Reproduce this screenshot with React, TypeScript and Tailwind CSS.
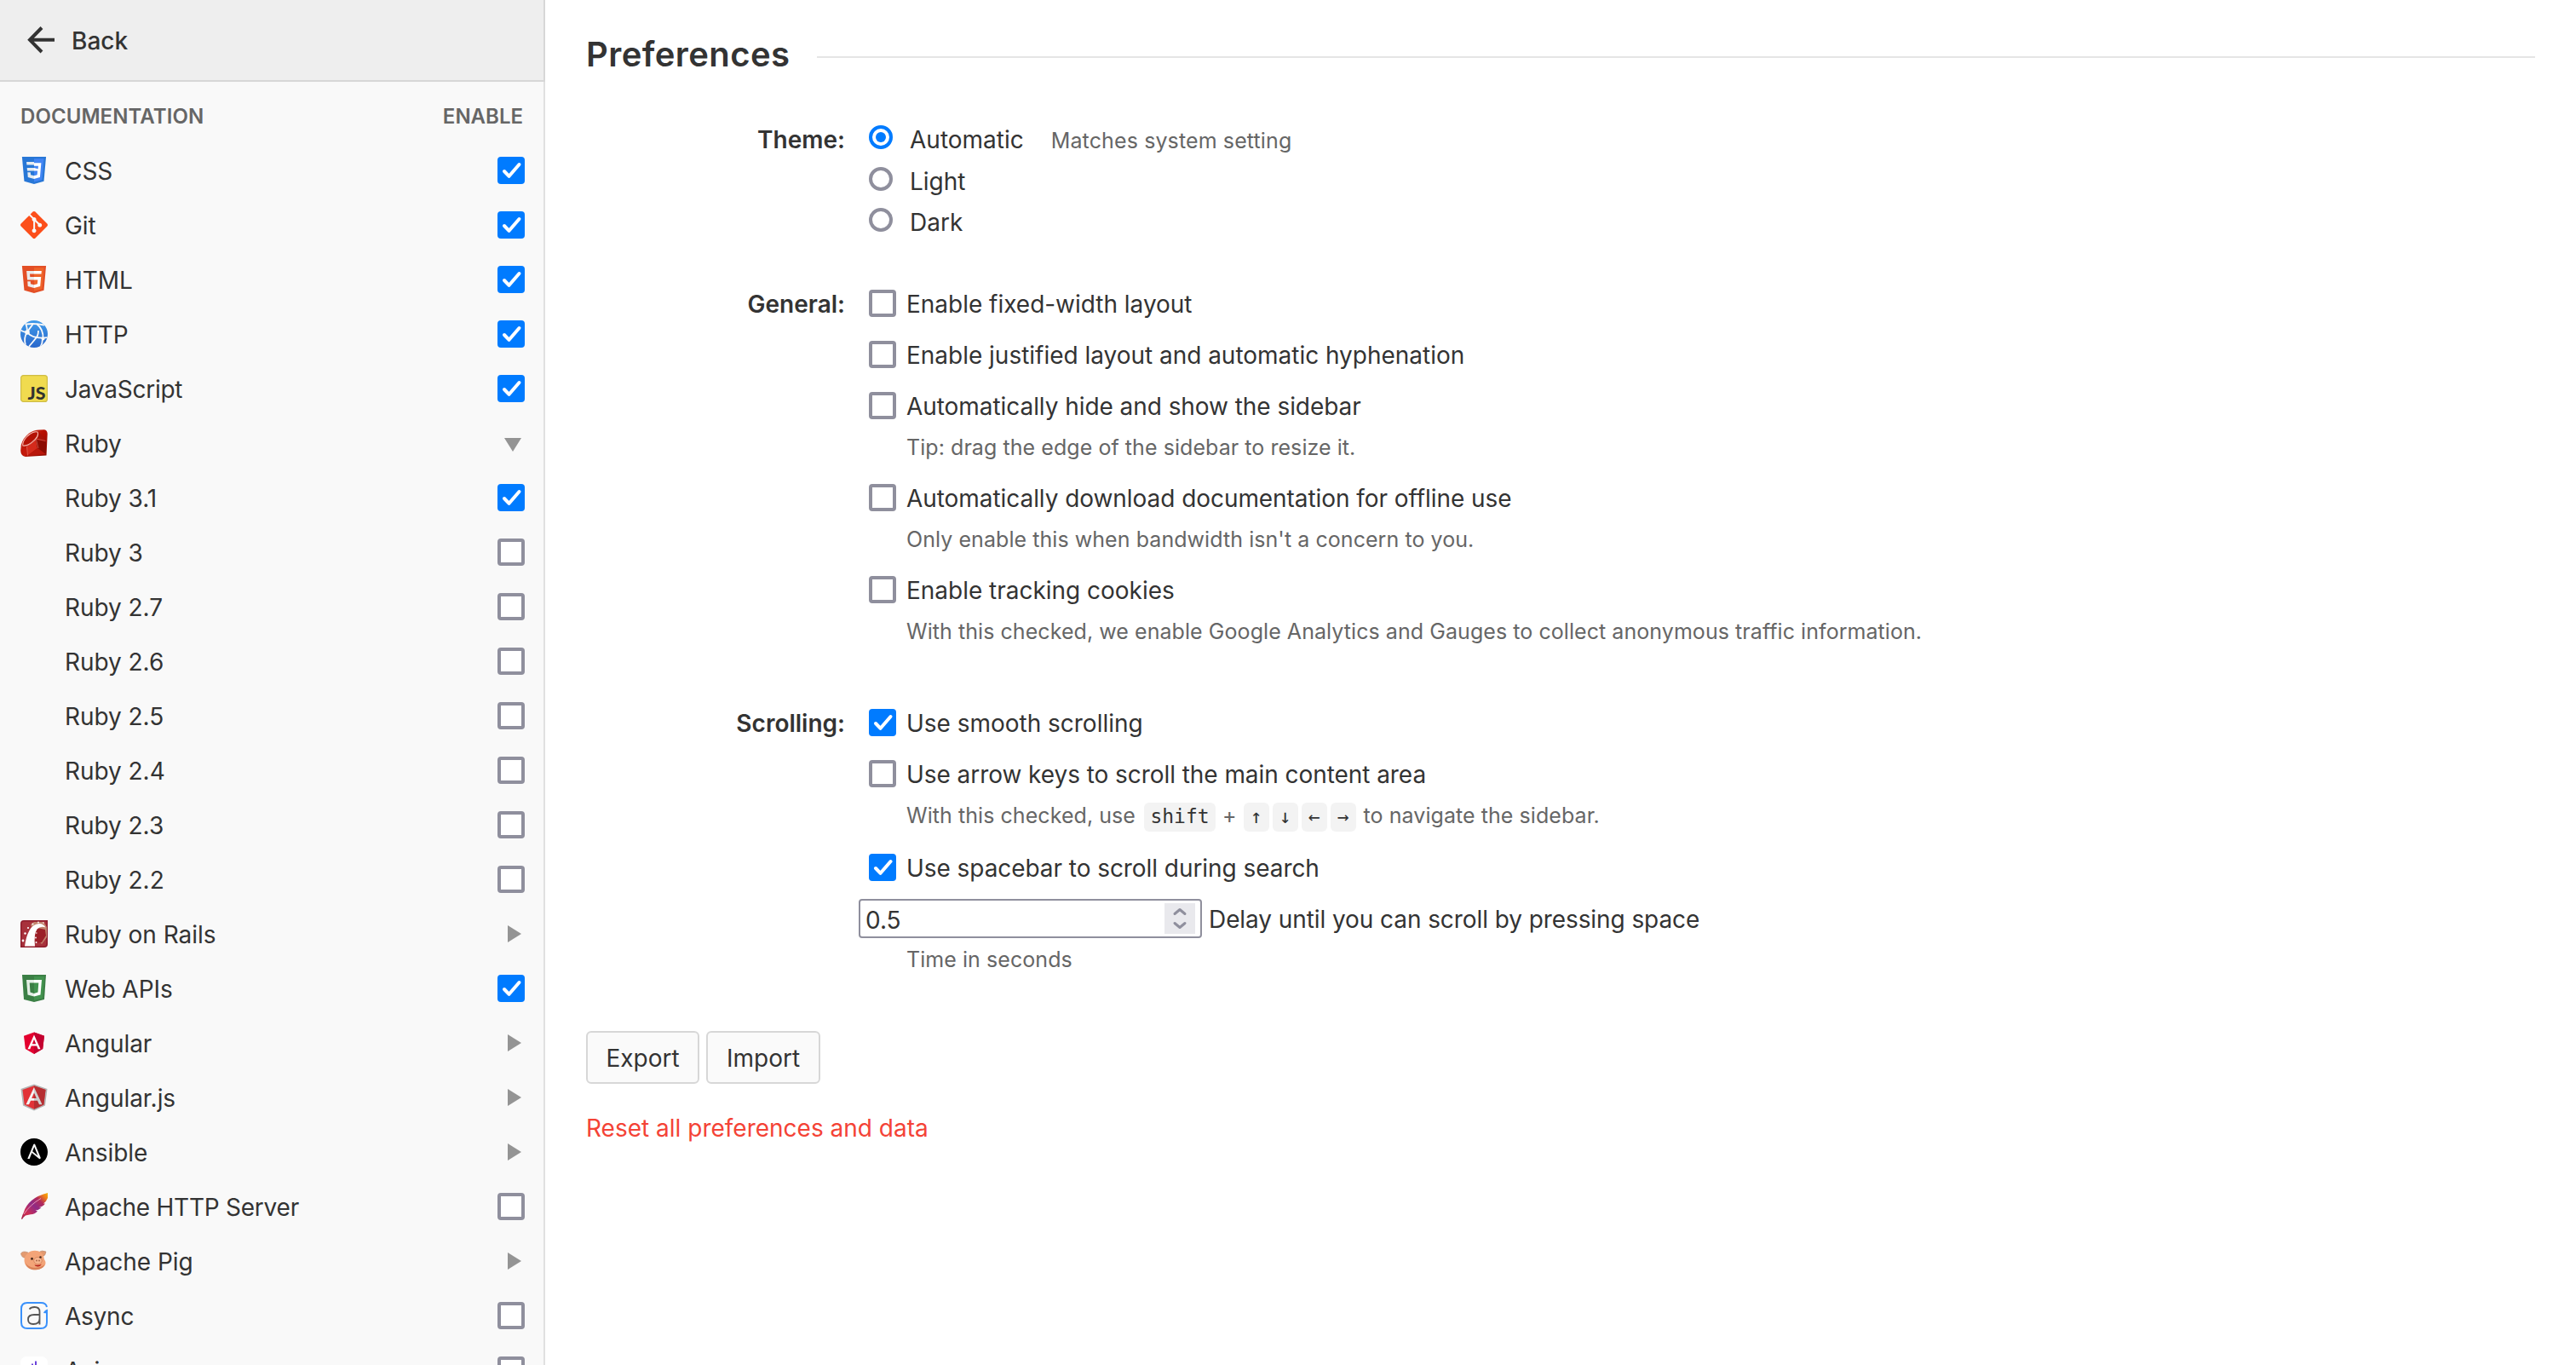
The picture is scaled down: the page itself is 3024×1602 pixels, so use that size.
import React from "react";
import { SiGit, SiAnsible } from "react-icons/si";

/* ---------- Documentation icons, all on a 32px grid ---------- */

function Svg({ children, viewBox = "0 0 32 32" }: { children: React.ReactNode; viewBox?: string }) {
  return (
    <svg className="h-8 w-8" viewBox={viewBox}>
      {children}
    </svg>
  );
}

const CssIcon = () => (
  <Svg viewBox="0 0 512 512">
    <path fill="#2877d6" d="M71 460L30 0h451l-41 460-185 52" />
    <path fill="#4285f4" d="M256 472l149-41 35-394H256" />
    <path fill="#e6ebf0" d="M256 208H123l5 57h128zm0-114H113l5 56h138zm0 320v-59l-63-17-4-45h-56l7 89 116 32z" />
    <path fill="#fff" d="M255 208v57h66l-7 73-59 17v59l112-32 23-268H255v56h80l-5 58z" />
  </Svg>
);

const HtmlIcon = () => (
  <Svg viewBox="0 0 512 512">
    <path fill="#e34f26" d="M71 460L30 0h451l-41 460-185 52" />
    <path fill="#ef652a" d="M256 472l149-41 35-394H256" />
    <path fill="#ebebeb" d="M256 208h-75l-5-58h80V94H114l15 171h127zm-1 147l-63-17-4-45h-56l7 89 116 32z" />
    <path fill="#fff" d="M255 208v57h70l-7 73-63 17v59l116-32 16-174zm0-114v56h137l5-56z" />
  </Svg>
);

const GitIcon = () => <SiGit className="h-8 w-8 text-[#fc4f1b]" />;

const HttpIcon = () => (
  <Svg>
    <defs>
      <linearGradient id="globe" x1="0" y1="0" x2="0" y2="1">
        <stop offset="0" stopColor="#3f9bea" />
        <stop offset="1" stopColor="#2a68cc" />
      </linearGradient>
      <clipPath id="globe-clip">
        <circle cx="16" cy="16" r="16" />
      </clipPath>
    </defs>
    <circle cx="16" cy="16" r="16" fill="url(#globe)" />
    <g clipPath="url(#globe-clip)" fill="none" stroke="#f9f9f9" strokeWidth="1.800">
      <path d="M5 2C7 5 8 9 8 14C5 18 4 22 6 29" />
      <path d="M6 4.500C14 3.500 19 3.500 28 5.500" />
      <path d="M-1 11C3 13.500 5 14 8 14C10 10 12 8 15 4" />
      <path d="M8 14C12 19 19 22 33 20" />
      <path d="M19 4C24 8 27 14 26.500 21.500" />
      <path d="M21 12C21 16 20 19 18 21C15 25 12 28 9 32" />
      <path d="M26 21.500C26 25 25 29 23 32" />
    </g>
    <circle cx="8" cy="14" r="2.800" fill="#f9f9f9" />
    <circle cx="26.500" cy="21.500" r="2" fill="#f9f9f9" />
  </Svg>
);

const JsIcon = () => (
  <Svg>
    <rect x="0.600" y="0.600" width="30.800" height="30.800" rx="3" fill="#f0db4f" stroke="#cfbd45" strokeWidth="1.200" />
    <text x="8.600" y="29" fill="#323330" fontFamily="Lato" fontWeight="900" fontSize="20" textLength="21" lengthAdjust="spacingAndGlyphs">
      JS
    </text>
  </Svg>
);

const RubyIcon = () => (
  <Svg>
    <defs>
      <linearGradient id="gem" x1="0" y1="0" x2="1" y2="1">
        <stop offset="0" stopColor="#e0584a" />
        <stop offset="0.450" stopColor="#b80f00" />
        <stop offset="1" stopColor="#8a0a00" />
      </linearGradient>
    </defs>
    <path d="M22 0.500L28 0.300Q31.500 1 31.700 5L30.500 30.500L6 32Q0.500 31 0.200 25L0.800 18Q3 10 10 4.500Q16 0.500 22 0.500Z" fill="url(#gem)" />
    <path d="M2 22L7 21L8 31L4 31Q1 29 2 22Z" fill="#c41a0c" />
    <path d="M7 21L18 12L20 22L8 31Z" fill="#d42a1b" />
    <path d="M18 12L30 14L30 29L20 22Z" fill="#8c0c02" />
    <path d="M20 22L30 29L8 31Z" fill="#b8170b" />
    <path d="M20 12L22 3L30 13Z" fill="#a81206" />
    <path d="M3 19Q1.500 15 8 8Q15 1.500 20 3Q22 7 17 12Q9 20 3 19Z" fill="#b31205" stroke="#f3b9b0" strokeWidth="1.100" />
    <path d="M18.500 11L29.500 13.500M18.500 11.500L7.500 20L8.500 30.500M18.500 12L21 22" fill="none" stroke="#e2766a" strokeWidth="0.600" />
  </Svg>
);

const RailsIcon = () => (
  <Svg>
    <path d="M4 0H32V28Q32 32 28 32H0V4Q0 0 4 0Z" fill="#8f1d2c" />
    <path d="M4 1.500H30.500V27Q30.500 30.500 27 30.500H1.500V4Q1.500 1.500 4 1.500Z" fill="#a8323c" />
    <path d="M12 5L16 2H27L31 8V20L25 28L18 20Z" fill="#c9997a" opacity="0.800" />
    <path d="M20 9L29 11L30 18L25 26L17.500 27L17 16Z" fill="#9c2028" />
    <path d="M5 30.500Q6.500 19 10.500 12Q14.500 4.500 22 4Q27 4 29.500 8.500Q23.500 6.500 19.500 10.500Q15.500 16 17 30.500Z" fill="#fff" />
    <g fill="#fff">
      <circle cx="3" cy="24" r="1.400" />
      <circle cx="5.500" cy="15.500" r="1.200" />
      <circle cx="9" cy="9" r="1.100" />
      <circle cx="14.500" cy="4.500" r="1" />
      <circle cx="21" cy="2.500" r="0.900" />
      <circle cx="27" cy="3" r="0.800" />
      <circle cx="18.800" cy="15" r="0.800" />
      <circle cx="18" cy="20.500" r="0.900" />
      <circle cx="18.500" cy="26" r="1" />
    </g>
  </Svg>
);

const WebApiIcon = () => (
  <Svg>
    <path d="M2 0H30L28 29L16 32L4 29Z" fill="#3b7f45" />
    <path d="M16 2H28L26 27.500L16 30Z" fill="#43934f" />
    <path d="M7 6H16V9.500H10.700L11.500 20.500L16 22V25.500L8.500 23.500Z" fill="#e3eee5" />
    <path d="M25 6H16V9.500H21.300L20.500 20.500L16 22V25.500L23.500 23.500Z" fill="#fff" />
  </Svg>
);

const AngularIcon = () => (
  <Svg>
    <path d="M16 3.500L28 7.800L26.200 23L16 29L5.800 23L4 7.800Z" fill="#e4002f" />
    <path d="M16 3.500L28 7.800L26.200 23L16 29Z" fill="#c30030" />
    <path d="M16 6.500L8.500 23.300H11.300L12.800 19.500H19.200L20.700 23.300H23.500ZM16 11.700L18.200 17.200H13.800Z" fill="#fff" fillRule="evenodd" />
  </Svg>
);

const AngularJsIcon = () => (
  <Svg>
    <path d="M16 0.500L31.500 6L29 25.500L16 31.500L3 25.500L0.500 6Z" fill="#b3b3b3" />
    <path d="M16 2.200L29.500 7L27.300 24.500L16 29.800L4.700 24.500L2.500 7Z" fill="#e23237" />
    <path d="M16 2.200L29.500 7L27.300 24.500L16 29.800Z" fill="#b52e31" />
    <path d="M16 4L6.500 24.300H10L12 19.800H16V17H13.200L16 10.500Z" fill="#f4f4f4" />
    <path d="M16 4V10.500L18.800 17H16V19.800H20L22 24.300H25.500Z" fill="#cfcfcf" />
  </Svg>
);

const AnsibleIcon = () => <SiAnsible className="h-8 w-8 text-black" />;

const FeatherIcon = () => (
  <Svg>
    <defs>
      <linearGradient id="feather" x1="1" y1="0" x2="0" y2="1">
        <stop offset="0" stopColor="#f7b500" />
        <stop offset="0.140" stopColor="#ee7a1c" />
        <stop offset="0.300" stopColor="#b22a5a" />
        <stop offset="0.500" stopColor="#8f2a86" />
        <stop offset="0.780" stopColor="#cf2f52" />
        <stop offset="1" stopColor="#9c2149" />
      </linearGradient>
    </defs>
    <path
      d="M32 0L32 6Q30.500 10 27 12.500L29 12.500Q27 15.500 22 17L24.500 17.500Q21 20.500 17.500 20.500L20 21.500Q17 25 12 25.300L6 26.500Q3.500 28 2 31L1 30.500Q2 26 4 22.500Q6 15 13 9Q20 3 32 0Z"
      fill="url(#feather)"
    />
    <path d="M4 25Q11 14 24 6.500" fill="none" stroke="#e8a0c4" strokeWidth="0.900" />
  </Svg>
);

const PigIcon = () => (
  <Svg>
    <path d="M0.500 7Q3 3.500 9 6L6.500 12Q1.500 13 0.500 7Z" fill="#e39a70" stroke="#b98a6e" strokeWidth="0.600" />
    <path d="M30 5Q25 2.500 21 6L25.500 11Q29.500 10 30 5Z" fill="#e39a70" stroke="#b98a6e" strokeWidth="0.600" />
    <path d="M17 3.800C10 3.800 5 8.500 4.500 14.500C4.300 21 9 26.300 17 26.300C24 26.300 29.500 22.500 29.500 18C29.500 15.500 27.500 14.500 27.500 12C26 6.500 22.500 3.800 17 3.800Z" fill="#f3a478" />
    <path d="M6 18C9 24.500 22 26 28.500 20C27 24.500 22 26.300 17 26.300C11 26.300 7 23 6 18Z" fill="#d98258" />
    <ellipse cx="20.500" cy="15.500" rx="4.800" ry="4" fill="#f7b58f" stroke="#cc7a50" strokeWidth="0.700" />
    <ellipse cx="19" cy="15.500" rx="0.700" ry="1.100" fill="#8a4526" />
    <ellipse cx="22" cy="15.500" rx="0.700" ry="1.100" fill="#8a4526" />
    <circle cx="13.500" cy="13.200" r="1.500" fill="#4a2d20" />
    <circle cx="23.500" cy="11.500" r="1.300" fill="#4a2d20" />
    <path d="M16.500 20.200Q21 21.500 25 19.500Q22.500 24 17.500 21.800Z" fill="#b3201a" />
  </Svg>
);

const AsyncIcon = () => (
  <Svg>
    <path d="M31 6Q30 1 24 1H8Q1 1 1 8V24Q1 31 8 31H24Q31 31 31 24V11" fill="none" stroke="#3a91fb" strokeWidth="2" />
    <path d="M27 13Q28 9.500 32 8.500V13.500Z" fill="#3a91fb" />
    <path d="M10.500 8.500Q12.500 6 16.500 6Q22.500 6 22.500 11.500V26.500M22.500 15H16Q9 15 9 20.500Q9 26 15 26Q22.500 26 22.500 19.500" fill="none" stroke="#555" strokeWidth="1.800" />
  </Svg>
);

const AxiosIcon = () => (
  <Svg>
    <rect width="32" height="32" rx="7" fill="#fff" />
    <path d="M14 8.500V24M18 5.500V20" stroke="#5b2fd6" strokeWidth="1.800" />
    <path d="M5 26L11 14M27 26L21 14" stroke="#5b2fd6" strokeWidth="1.800" />
  </Svg>
);

/* ---------- Form controls ---------- */

function Checkbox({ checked = false }: { checked?: boolean }) {
  return checked ? (
    <span className="flex h-8 w-8 shrink-0 rounded bg-[#007bff]" role="checkbox" aria-checked="true">
      <svg className="h-8 w-8" viewBox="0 0 32 32" fill="none" stroke="#fff" strokeWidth="4" strokeLinecap="round" strokeLinejoin="round">
        <path d="M8 17L13.600 22.800L25.500 9" />
      </svg>
    </span>
  ) : (
    <span className="h-8 w-8 shrink-0 rounded border-4 border-[#8f8f9d] bg-white" role="checkbox" aria-checked="false" />
  );
}

function Radio({ checked = false }: { checked?: boolean }) {
  return checked ? (
    <span className="mb-[5px] flex h-7 w-7 shrink-0 items-center justify-center rounded-full border-4 border-[#007bff] bg-white">
      <span className="h-3 w-3 rounded-full bg-[#007bff]" />
    </span>
  ) : (
    <span className="mb-[5px] h-7 w-7 shrink-0 rounded-full border-4 border-[#8f8f9d] bg-white" />
  );
}

/* ---------- Sidebar ---------- */

type Control = "on" | "off" | "open" | "closed";
type Doc = { name: string; control: Control; icon?: React.ReactNode; tight?: boolean };

const docs: Doc[] = [
  { name: "CSS", control: "on", icon: <CssIcon /> },
  { name: "Git", control: "on", icon: <GitIcon /> },
  { name: "HTML", control: "on", icon: <HtmlIcon /> },
  { name: "HTTP", control: "on", icon: <HttpIcon /> },
  { name: "JavaScript", control: "on", icon: <JsIcon />, tight: true },
  { name: "Ruby", control: "open", icon: <RubyIcon /> },
  { name: "Ruby 3.1", control: "on" },
  { name: "Ruby 3", control: "off" },
  { name: "Ruby 2.7", control: "off" },
  { name: "Ruby 2.6", control: "off" },
  { name: "Ruby 2.5", control: "off" },
  { name: "Ruby 2.4", control: "off" },
  { name: "Ruby 2.3", control: "off" },
  { name: "Ruby 2.2", control: "off" },
  { name: "Ruby on Rails", control: "closed", icon: <RailsIcon /> },
  { name: "Web APIs", control: "on", icon: <WebApiIcon /> },
  { name: "Angular", control: "closed", icon: <AngularIcon /> },
  { name: "Angular.js", control: "closed", icon: <AngularJsIcon /> },
  { name: "Ansible", control: "closed", icon: <AnsibleIcon /> },
  { name: "Apache HTTP Server", control: "off", icon: <FeatherIcon />, tight: true },
  { name: "Apache Pig", control: "closed", icon: <PigIcon /> },
  { name: "Async", control: "off", icon: <AsyncIcon />, tight: true },
  { name: "Axios", control: "off", icon: <AxiosIcon /> },
];

function RowControl({ control }: { control: Control }) {
  if (control === "on") return <Checkbox checked />;
  if (control === "off") return <Checkbox />;
  return control === "open" ? (
    <svg className="mt-1 mr-1 h-4 w-5" viewBox="0 0 20 16" fill="#949494">
      <path d="M0 0H20L10 16Z" />
    </svg>
  ) : (
    <svg className="mr-1 h-5 w-4" viewBox="0 0 16 20" fill="#949494">
      <path d="M0 0L16 10L0 20Z" />
    </svg>
  );
}

function Sidebar() {
  return (
    <aside className="flex w-[640px] shrink-0 flex-col border-r-2 border-[#e1e1e1] bg-[#f9f9f9]">
      <div className="-mr-0.5 flex h-24 shrink-0 items-center border-r-2 border-b-2 border-[#d7d7d7] bg-[#eee] pl-8">
        <svg className="h-8 w-8" viewBox="0 0 32 32" fill="none" stroke="#333" strokeWidth="4">
          <path d="M17 1.500L3 15.800L17 30M3 15.800H32" />
        </svg>
        <span className="mt-0.5 ml-5 font-medium">Back</span>
      </div>
      <div className="flex h-[72px] shrink-0 items-center justify-between pt-2.5 pr-6 pl-6 text-2xl font-semibold text-[#666]">
        <span className="tracking-[0.07px]">DOCUMENTATION</span>
        <span>ENABLE</span>
      </div>
      {docs.map((doc) => (
        <div key={doc.name} className="flex h-16 shrink-0 items-center pr-[22px] pl-6">
          <span className="h-8 w-8">{doc.icon}</span>
          <span className={doc.tight ? "mt-0.5 ml-5 flex-1 tracking-[-0.24px]" : "mt-0.5 ml-5 flex-1 tracking-[-0.04px]"}>{doc.name}</span>
          <RowControl control={doc.control} />
        </div>
      ))}
    </aside>
  );
}

/* ---------- Preferences ---------- */

function Section({ label, className, children }: { label: string; className: string; children: React.ReactNode }) {
  return (
    <section className={`flex ${className}`}>
      <h2 className="w-[304px] shrink-0 text-right leading-[63px] font-semibold">{label}</h2>
      <div className="ml-7 flex flex-col">{children}</div>
    </section>
  );
}

function Option({ checked, tight, children }: { checked?: boolean; tight?: boolean; children: React.ReactNode }) {
  return (
    <div className="flex h-[60px] items-center">
      <Checkbox checked={checked} />
      <span className={tight ? "mt-0.5 ml-3 tracking-[-0.06px]" : "mt-0.5 ml-3 tracking-[-0.02px]"}>{children}</span>
    </div>
  );
}

function Note({ className = "h-12 leading-[39px]", children }: { className?: string; children: React.ReactNode }) {
  return <div className={`ml-11 text-[25px] tracking-[0.06px] whitespace-nowrap text-[#666] ${className}`}>{children}</div>;
}

function Key({ className = "w-[30px]", children }: { className?: string; children: React.ReactNode }) {
  return (
    <kbd
      className={`flex h-[34px] items-center justify-center rounded-md bg-[#f3f3f3] pb-0.5 font-['DejaVu_Sans_Mono',monospace] text-[23px] tracking-normal text-[#333] ${className}`}
    >
      {children}
    </kbd>
  );
}

function Preferences() {
  return (
    <main className="flex flex-1 flex-col pt-6 pr-12 pl-12">
      <header className="flex h-20 items-center">
        <h1 className="text-[40px] font-semibold tracking-[0.42px]">Preferences</h1>
        <div className="mt-1.5 ml-8 h-0.5 flex-1 bg-[#e5e5e5]" />
      </header>

      <section className="mt-[35px] flex">
        <h2 className="w-[304px] shrink-0 text-right leading-[51px] font-semibold">Theme:</h2>
        <div className="ml-7 flex flex-col">
          <div className="flex h-[49px] items-center">
            <Radio checked />
            <span className="mt-px ml-5">Automatic</span>
            <span className="mt-0.5 ml-8 text-[25px] tracking-[0.12px] text-[#666]">Matches system setting</span>
          </div>
          <div className="flex h-12 items-center">
            <Radio />
            <span className="mt-0.5 ml-5">Light</span>
          </div>
          <div className="flex h-[49px] items-center">
            <Radio />
            <span className="mt-px ml-5">Dark</span>
          </div>
        </div>
      </section>

      <Section label="General:" className="mt-[41px]">
        <Option>Enable fixed-width layout</Option>
        <Option>Enable justified layout and automatic hyphenation</Option>
        <Option tight>Automatically hide and show the sidebar</Option>
        <Note>Tip: drag the edge of the sidebar to resize it.</Note>
        <Option tight>Automatically download documentation for offline use</Option>
        <Note>Only enable this when bandwidth isn't a concern to you.</Note>
        <Option>Enable tracking cookies</Option>
        <Note>With this checked, we enable Google Analytics and Gauges to collect anonymous traffic information.</Note>
      </Section>

      <Section label="Scrolling:" className="mt-12">
        <Option checked>Use smooth scrolling</Option>
        <Option tight>Use arrow keys to scroll the main content area</Option>
        <Note className="flex h-[50px] items-start leading-[39px]">
          <span>With this checked, use</span>
          <Key className="mt-1 ml-[10px] w-[84px]">shift</Key>
          <span className="mx-2">+</span>
          <span className="mt-1 flex gap-1">
            <Key>↑</Key>
            <Key>↓</Key>
            <Key>←</Key>
            <Key>→</Key>
          </span>
          <span className="ml-[9px]">to navigate the sidebar.</span>
        </Note>
        <Option tight checked>
          Use spacebar to scroll during search
        </Option>
        <div className="-ml-3 flex h-[60px] items-center">
          <div className="flex h-[46px] w-[403px] items-center justify-between rounded border-2 border-[#8f8f9d] bg-white pr-1.5 pl-1.5">
            <span className="mt-[3px]">0.5</span>
            <span className="flex h-9 w-9 items-center justify-center bg-[#e9e9ed]">
              <svg className="h-9 w-9" viewBox="0 0 36 36" fill="none" stroke="#8f8f9d" strokeWidth="3" strokeLinecap="round" strokeLinejoin="round">
                <path d="M12 12.500L18 7.500L24 12.500M12 23.500L18 28.500L24 23.500" />
              </svg>
            </span>
          </div>
          <span className="mt-0.5 ml-2 tracking-[-0.08px]">Delay until you can scroll by pressing space</span>
        </div>
        <Note className="h-9 leading-[37px]">Time in seconds</Note>
      </Section>

      <div className="mt-[66px] flex gap-2">
        <button className="h-[62px] w-[133px] rounded-md border-2 border-[#d7d7d7] bg-[#fafafa] pt-0.5">Export</button>
        <button className="h-[62px] w-[134px] rounded-md border-2 border-[#d7d7d7] bg-[#fafafa] pt-0.5">Import</button>
      </div>
      <a className="mt-[34px] leading-9 text-[#f44336]">Reset all preferences and data</a>
    </main>
  );
}

export default function App() {
  return (
    <div className="flex h-[1602px] w-[3024px] overflow-hidden bg-white font-['Inter',sans-serif] text-[28px] leading-9 text-[#333]">
      <Sidebar />
      <Preferences />
    </div>
  );
}
